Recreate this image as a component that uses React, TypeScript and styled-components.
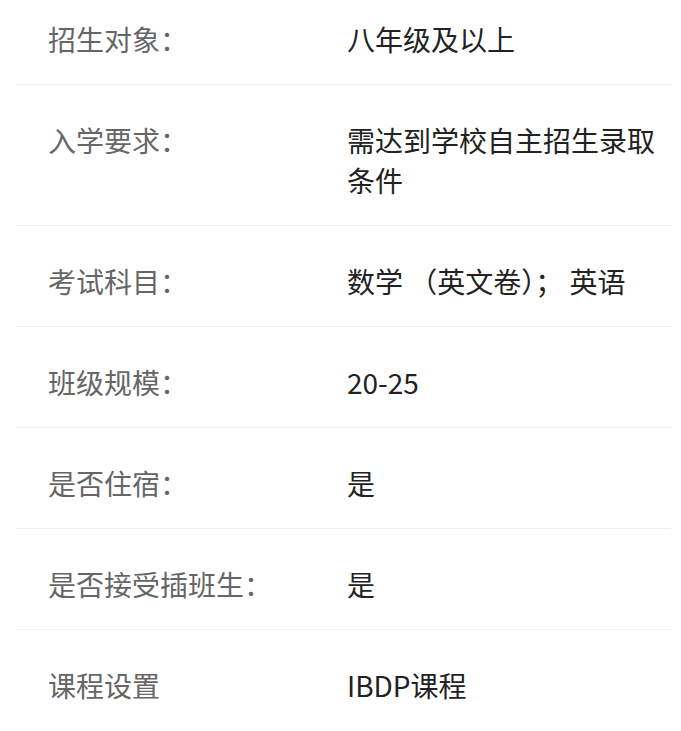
import styled, { createGlobalStyle } from "styled-components";

const GlobalStyle = createGlobalStyle`
  body {
    margin: 0;
    background: #fff;
    font-family: "Noto Sans CJK SC", "Noto Sans", sans-serif;
  }
`;

const items: Array<{ label: string; value: string }> = [
  { label: "招生对象：", value: "八年级及以上" },
  { label: "入学要求：", value: "需达到学校自主招生录取条件" },
  { label: "考试科目：", value: "数学 （英文卷）； 英语" },
  { label: "班级规模：", value: "20-25" },
  { label: "是否住宿：", value: "是" },
  { label: "是否接受插班生：", value: "是" },
  { label: "课程设置", value: "IBDP课程" },
];

const App = () => {
  return (
    <>
      <GlobalStyle />
      <List>
        {items.map((item, i) => (
          <Row key={i} last={i === items.length - 1}>
            <Label>{item.label}</Label>
            <Value>{item.value}</Value>
          </Row>
        ))}
      </List>
    </>
  );
};

const List = styled.div`
  margin: -16px 10px 0 16px;
`;

const Row = styled.div<{ last?: boolean }>`
  display: flex;
  align-items: flex-start;
  padding: 35px 0 25px;
  border-bottom: 1px solid ${(p) => (p.last ? "transparent" : "#eeeeee")};
`;

const Label = styled.div`
  flex: 0 0 331px;
  box-sizing: border-box;
  padding-left: 32px;
  font-size: 28px;
  line-height: 40px;
  color: #666;
  white-space: nowrap;
`;

const Value = styled.div`
  flex: 1;
  font-size: 28px;
  line-height: 40px;
  color: #222;
  word-break: break-all;
`;

export default App;
